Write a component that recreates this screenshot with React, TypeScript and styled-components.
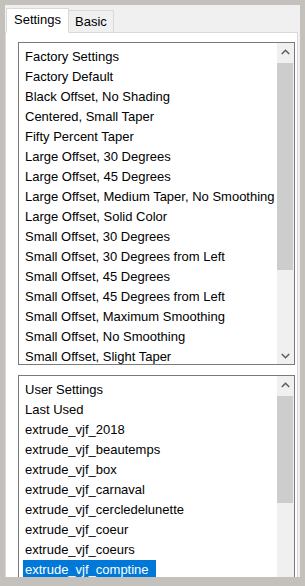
import styled, { createGlobalStyle } from "styled-components";

const GlobalStyle = createGlobalStyle`
  html, body {
    margin: 0;
    padding: 0;
    background: #c4c0bc;
  }
  * {
    box-sizing: border-box;
  }
`;

const Frame = styled.div`
  width: 305px;
  height: 586px;
  background: #c4c0bc;
  padding: 5px 5px 9px 5px;
  display: flex;
  overflow: hidden;
  font-family: "Liberation Sans", Arial, sans-serif;
  font-size: 13px;
  color: #000;
`;

const Window = styled.div`
  flex: 1;
  background: #f0f0f0;
  display: flex;
  flex-direction: column;
  overflow: hidden;
`;

const TabStrip = styled.div`
  height: 27px;
  flex-shrink: 0;
  display: flex;
  align-items: flex-end;
  padding-left: 1px;
`;

interface TabProps {
  active?: boolean;
}

const Tab = styled.div<TabProps>`
  position: relative;
  z-index: ${(p) => (p.active ? 2 : 1)};
  height: ${(p) => (p.active ? 25 : 22)}px;
  margin-bottom: ${(p) => (p.active ? -1 : 0)}px;
  padding: 0 ${(p) => (p.active ? 7 : 6)}px;
  padding-bottom: ${(p) => (p.active ? 2 : 0)}px;
  background: ${(p) => (p.active ? "#ffffff" : "#f0f0f0")};
  border: 1px solid #d9d9d9;
  border-bottom: ${(p) => (p.active ? "1px solid #ffffff" : "none")};
  border-left: ${(p) => (p.active ? "1px solid #d9d9d9" : "none")};
  display: flex;
  align-items: center;
  line-height: 1;
`;

const Panel = styled.div`
  flex: 1;
  margin-right: 2px;
  background: #ffffff;
  border: 1px solid #d9d9d9;
  border-bottom: none;
  padding: 9px 2px 0 12px;
  display: flex;
  flex-direction: column;
  gap: 10px;
  overflow: hidden;
`;

interface ListBoxProps {
  height: number;
}

const ListBox = styled.div<ListBoxProps>`
  flex-shrink: 0;
  height: ${(p) => p.height}px;
  border: 1px solid #7a7a7a;
  background: #ffffff;
  display: flex;
  overflow: hidden;
`;

const Items = styled.div`
  flex: 1;
  min-width: 0;
  padding: 4px 4px 0 4px;
  display: flex;
  flex-direction: column;
  align-items: flex-start;
  overflow: hidden;
`;

interface ItemProps {
  selected?: boolean;
}

const Item = styled.div<ItemProps>`
  height: 20px;
  line-height: 20px;
  padding: 0 7px 0 2px;
  white-space: nowrap;
  flex-shrink: 0;
  background: ${(p) => (p.selected ? "#0078d7" : "transparent")};
  color: ${(p) => (p.selected ? "#ffffff" : "#000000")};
`;

const ScrollBar = styled.div`
  width: 17px;
  flex-shrink: 0;
  background: #f0f0f0;
  display: flex;
  flex-direction: column;
`;

const ArrowButton = styled.div`
  height: 17px;
  flex-shrink: 0;
  display: flex;
  align-items: center;
  justify-content: center;
`;

const Track = styled.div`
  flex: 1;
  display: flex;
  flex-direction: column;
  align-items: stretch;
`;

interface ThumbProps {
  offset: number;
  size: number;
}

const Thumb = styled.div<ThumbProps>`
  margin: ${(p) => p.offset}px 1px 0 0;
  height: ${(p) => p.size}px;
  background: #cdcdcd;
  flex-shrink: 0;
`;

function Chevron({ up }: { up?: boolean }) {
  return (
    <svg width="9" height="6" viewBox="0 0 9 6">
      <polyline
        points={up ? "0.8,5 4.5,1.3 8.2,5" : "0.8,1 4.5,4.7 8.2,1"}
        fill="none"
        stroke="#606060"
        strokeWidth="1.6"
      />
    </svg>
  );
}

const factory = [
  "Factory Settings",
  "Factory Default",
  "Black Offset, No Shading",
  "Centered, Small Taper",
  "Fifty Percent Taper",
  "Large Offset, 30 Degrees",
  "Large Offset, 45 Degrees",
  "Large Offset, Medium Taper, No Smoothing",
  "Large Offset, Solid Color",
  "Small Offset, 30 Degrees",
  "Small Offset, 30 Degrees from Left",
  "Small Offset, 45 Degrees",
  "Small Offset, 45 Degrees from Left",
  "Small Offset, Maximum Smoothing",
  "Small Offset, No Smoothing",
  "Small Offset, Slight Taper",
];

const user = [
  "User Settings",
  "Last Used",
  "extrude_vjf_2018",
  "extrude_vjf_beautemps",
  "extrude_vjf_box",
  "extrude_vjf_carnaval",
  "extrude_vjf_cercledelunette",
  "extrude_vjf_coeur",
  "extrude_vjf_coeurs",
  "extrude_vjf_comptine",
];

export default function App() {
  return (
    <>
      <GlobalStyle />
      <Frame>
        <Window>
          <TabStrip>
            <Tab active>Settings</Tab>
            <Tab>Basic</Tab>
          </TabStrip>
          <Panel>
            <ListBox height={323}>
              <Items>
                {factory.map((f) => (
                  <Item key={f}>{f}</Item>
                ))}
              </Items>
              <ScrollBar>
                <ArrowButton>
                  <Chevron up />
                </ArrowButton>
                <Track>
                  <Thumb offset={3} size={207} />
                </Track>
                <ArrowButton>
                  <Chevron />
                </ArrowButton>
              </ScrollBar>
            </ListBox>
            <ListBox height={260}>
              <Items>
                {user.map((u) => (
                  <Item key={u} selected={u === "extrude_vjf_comptine"}>
                    {u}
                  </Item>
                ))}
              </Items>
              <ScrollBar>
                <ArrowButton>
                  <Chevron up />
                </ArrowButton>
                <Track>
                  <Thumb offset={3} size={107} />
                </Track>
              </ScrollBar>
            </ListBox>
          </Panel>
        </Window>
      </Frame>
    </>
  );
}
